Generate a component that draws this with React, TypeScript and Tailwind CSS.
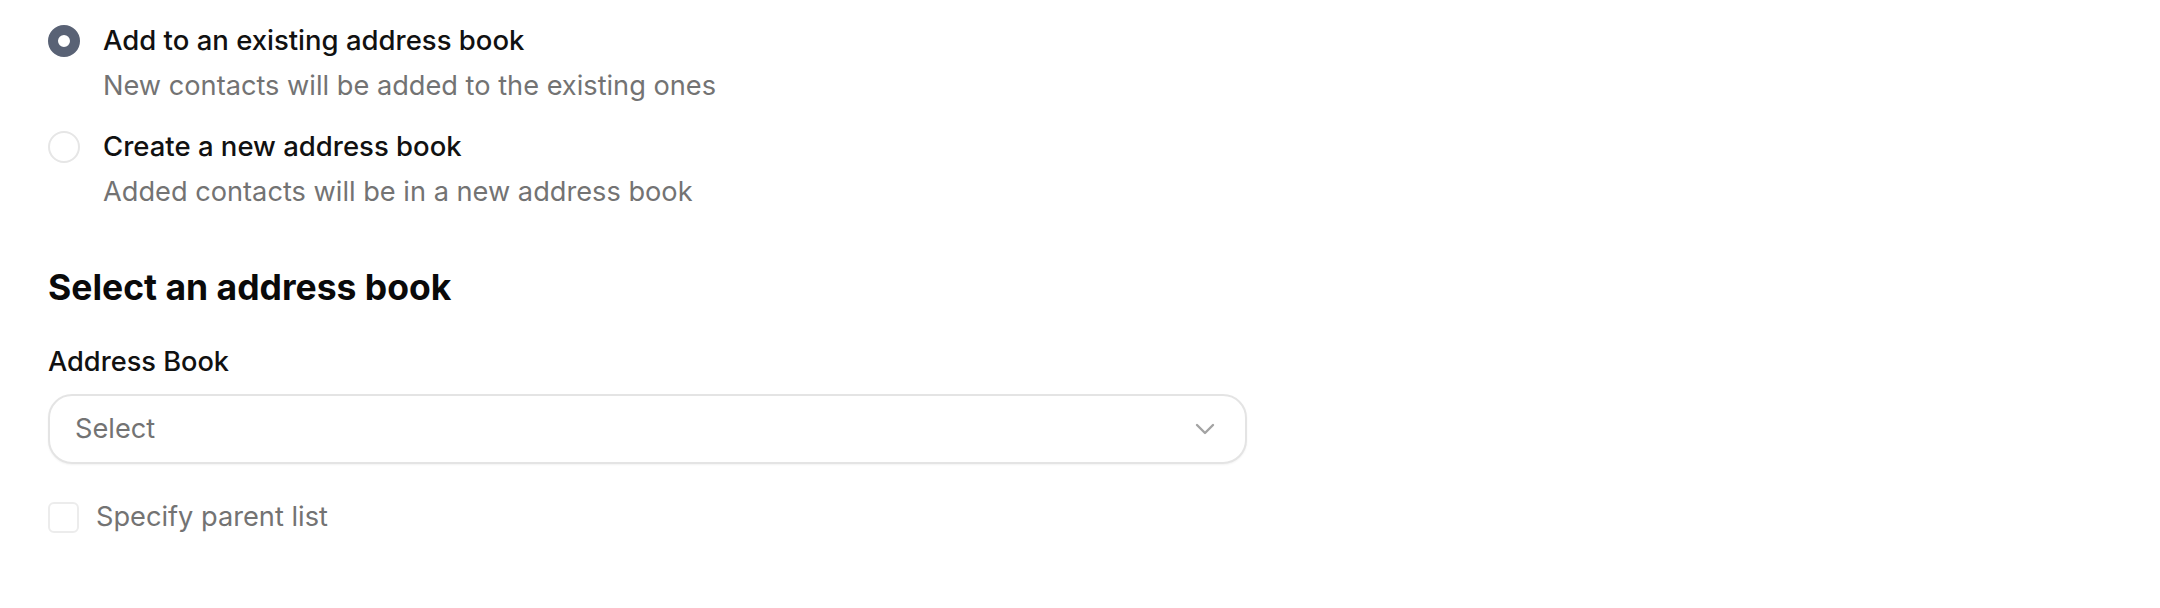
import React, { useState } from 'react'

type Option = {
  id: string
  title: string
  description: string
}

const options: Option[] = [
  {
    id: 'existing',
    title: 'Add to an existing address book',
    description: 'New contacts will be added to the existing ones',
  },
  {
    id: 'new',
    title: 'Create a new address book',
    description: 'Added contacts will be in a new address book',
  },
]

const ChevronDown = () => (
  <svg width="20" height="12" viewBox="0 0 20 12" fill="none">
    <path d="M2 2l8 8 8-8" stroke="#a3a3a3" strokeWidth="2.4" strokeLinecap="round" strokeLinejoin="round" />
  </svg>
)

export default function App() {
  const [selected, setSelected] = useState('existing')
  const [parentList, setParentList] = useState(false)

  return (
    <div className="min-h-[608px] w-full bg-white px-12 pt-[24px] font-['Inter',sans-serif] antialiased">
      {/* Radio group */}
      <div className="flex flex-col gap-[28px]">
        {options.map((opt) => {
          const active = selected === opt.id
          return (
            <label key={opt.id} className="flex cursor-pointer items-start gap-[23px]" onClick={() => setSelected(opt.id)}>
              <span
                className={
                  active
                    ? 'mt-[1px] h-[32px] w-[32px] shrink-0 rounded-full border-[10px] border-[#596275] bg-white'
                    : 'mt-[1px] h-[32px] w-[32px] shrink-0 rounded-full border-2 border-[#e6e6e6] bg-white'
                }
              />
              <span className="flex flex-col">
                <span className="text-[27.5px] font-medium leading-[32px] text-[#111111]">{opt.title}</span>
                <span className="mt-[14px] text-[27.2px] leading-[32px] text-[#737373]">{opt.description}</span>
              </span>
            </label>
          )
        })}
      </div>

      {/* Address book */}
      <h2 className="mt-[60px] text-[35.5px] font-bold leading-[40px] text-[#0a0a0a]">Select an address book</h2>

      <div className="mt-[38px] text-[27.2px] font-medium leading-[32px] text-[#111111]">Address Book</div>

      <button className="mt-4 flex h-[70px] w-[1199px] items-center justify-between rounded-[24px] border-2 border-[#e4e4e4] bg-white pl-[25px] pr-[30px] shadow-[0_1px_2px_rgba(0,0,0,0.05)]">
        <span className="text-[27.2px] leading-[32px] text-[#737373]">Select</span>
        <ChevronDown />
      </button>

      <label className="mt-[37px] flex cursor-pointer items-center gap-[17px]" onClick={() => setParentList(!parentList)}>
        <span className="h-[31px] w-[31px] shrink-0 rounded-[6px] border-2 border-[#ececec] bg-white" />
        <span className="text-[27.2px] leading-[32px] text-[#737373]">Specify parent list</span>
      </label>
    </div>
  )
}
